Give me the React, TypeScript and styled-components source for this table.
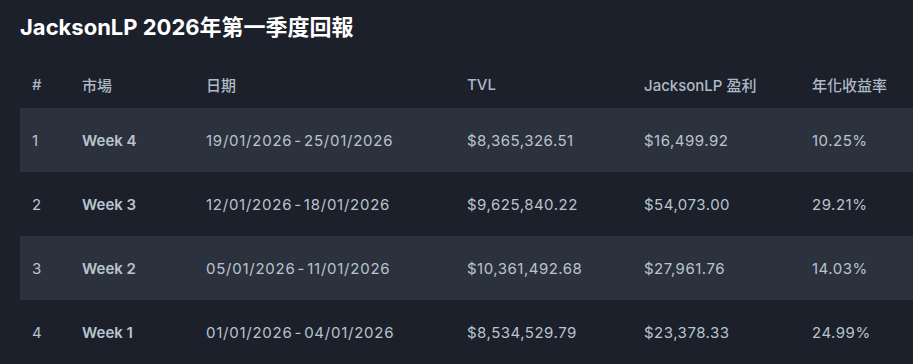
import React from "react";
import styled, { createGlobalStyle } from "styled-components";

const GlobalStyle = createGlobalStyle`
  html, body {
    margin: 0;
    padding: 0;
    background: #1b202a;
    overflow: hidden;
  }
  body {
    font-family: Inter, "Noto Sans CJK TC", "Noto Sans CJK SC", sans-serif;
  }
`;

const Page = styled.div`
  width: 913px;
  height: 364px;
  background: #1b202a;
  padding: 12px 0 0 20px;
  box-sizing: border-box;
  overflow: hidden;
`;

const Title = styled.h1`
  margin: 0;
  font-size: 22px;
  line-height: 30px;
  font-weight: 700;
  color: #ffffff;
  white-space: nowrap;
`;

const Table = styled.table`
  margin-top: 18px;
  border-collapse: collapse;
  table-layout: fixed;
  width: 960px;
`;

const Th = styled.th<{ $w: number }>`
  width: ${(p) => p.$w}px;
  box-sizing: border-box;
  padding: 0 12px;
  height: 48px;
  text-align: left;
  font-size: 15px;
  font-weight: 500;
  color: #adb9c7;
  white-space: nowrap;
`;

const Row = styled.tr<{ $striped: boolean }>`
  background: ${(p) => (p.$striped ? "#2c323d" : "transparent")};
`;

const Td = styled.td<{ $bold?: boolean; $spacing?: number }>`
  padding: 0 12px;
  height: 64px;
  font-size: 15px;
  font-weight: ${(p) => (p.$bold ? 600 : 400)};
  color: #b9c4d0;
  white-space: nowrap;
  letter-spacing: ${(p) => (p.$bold ? 0 : p.$spacing ?? 0.5)}px;
`;

const Dash = styled.span`
  margin: 0 2px;
`;

const columns = [
  { label: "#", w: 50 },
  { label: "市場", w: 124 },
  { label: "日期", w: 261 },
  { label: "TVL", w: 177 },
  { label: "JacksonLP 盈利", w: 168 },
  { label: "年化收益率", w: 180 },
];

const rows = [
  ["1", "Week 4", "19/01/2026-25/01/2026", "$8,365,326.51", "$16,499.92", "10.25%"],
  ["2", "Week 3", "12/01/2026-18/01/2026", "$9,625,840.22", "$54,073.00", "29.21%"],
  ["3", "Week 2", "05/01/2026-11/01/2026", "$10,361,492.68", "$27,961.76", "14.03%"],
  ["4", "Week 1", "01/01/2026-04/01/2026", "$8,534,529.79", "$23,378.33", "24.99%"],
];

function DateRange({ value }: { value: string }) {
  const [from, to] = value.split("-");
  return (
    <>
      {from}
      <Dash>-</Dash>
      {to}
    </>
  );
}

export default function App() {
  return (
    <>
      <GlobalStyle />
      <Page>
        <Title>JacksonLP 2026年第一季度回報</Title>
        <Table>
          <thead>
            <tr>
              {columns.map((c) => (
                <Th key={c.label} $w={c.w}>
                  {c.label}
                </Th>
              ))}
            </tr>
          </thead>
          <tbody>
            {rows.map((r, i) => (
              <Row key={r[0]} $striped={i % 2 === 0}>
                {r.map((cell, j) => (
                  <Td key={j} $bold={j === 1} $spacing={j === 2 ? 0.75 : 0.5}>
                    {j === 2 ? <DateRange value={cell} /> : cell}
                  </Td>
                ))}
              </Row>
            ))}
          </tbody>
        </Table>
      </Page>
    </>
  );
}
